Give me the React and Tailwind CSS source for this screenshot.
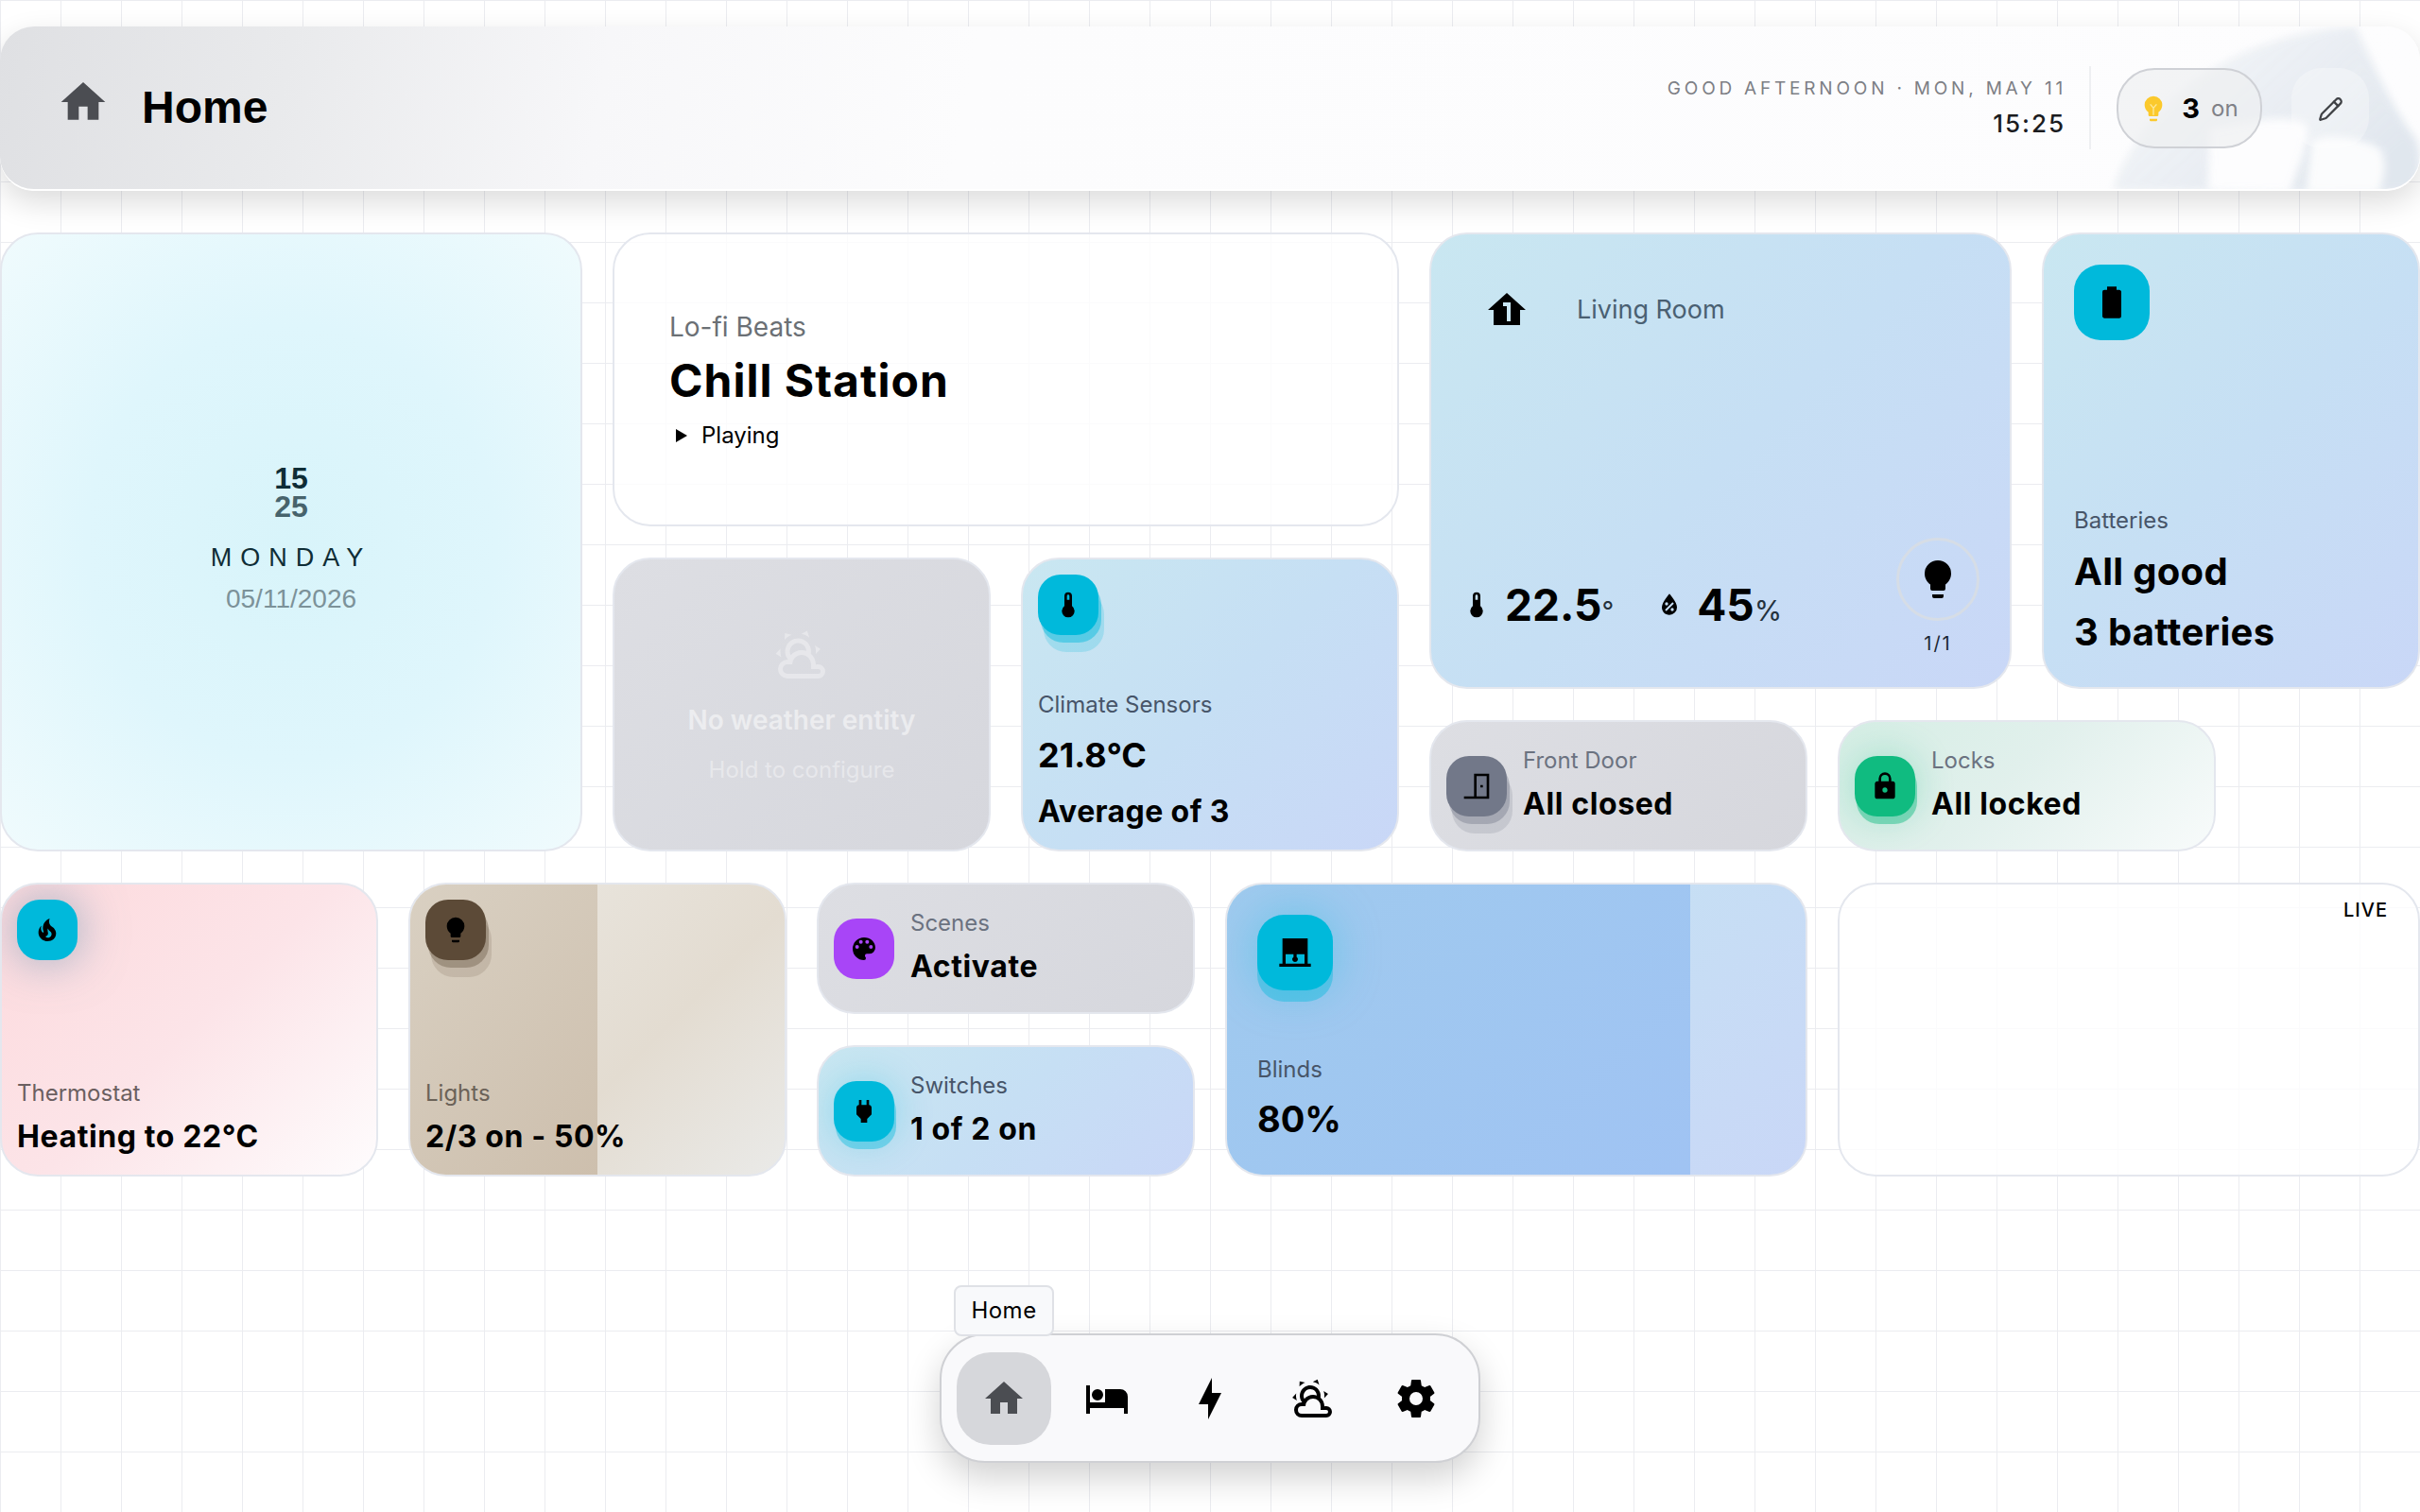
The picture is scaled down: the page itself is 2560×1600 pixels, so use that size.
import React from "react"
import { Pencil } from "lucide-react"

const mdi = {
  home: "M10,20V14H14V20H19V12H22L12,3L2,12H5V20H10Z",
  bed: "M19,7H11V14H3V5H1V20H3V17H21V20H23V11A4,4 0 0,0 19,7M7,13A3,3 0 0,0 10,10A3,3 0 0,0 7,7A3,3 0 0,0 4,10A3,3 0 0,0 7,13Z",
  bolt: "M11 15H6L13 1V9H18L11 23V15Z",
  weather: "M12.74,5.47C15.1,6.5 16.35,9.03 15.92,11.46C17.19,12.56 18,14.19 18,16V16.17C18.31,16.06 18.65,16 19,16A3,3 0 0,1 22,19A3,3 0 0,1 19,22H6A4,4 0 0,1 2,18A4,4 0 0,1 6,14H6.27C5,12.45 4.6,10.24 5.5,8.26C6.72,5.5 9.97,4.24 12.74,5.47M11.93,7.3C10.16,6.5 8.09,7.31 7.31,9.07C6.85,10.09 6.93,11.22 7.41,12.13C8.5,10.83 10.16,10 12,10C12.7,10 13.38,10.12 14,10.34C13.94,9.06 13.18,7.86 11.93,7.3M13.55,3.64C13,3.4 12.45,3.23 11.88,3.12L14.37,1.82L15.27,4.71C14.76,4.29 14.19,3.93 13.55,3.64M6.09,4.44C5.6,4.79 5.17,5.19 4.8,5.63L4.91,2.82L7.87,3.5C7.25,3.71 6.65,4.03 6.09,4.44M18,9.71C17.91,9.12 17.78,8.55 17.59,8L19.97,9.5L17.92,11.73C18.03,11.08 18.05,10.4 18,9.71M3.04,11.3C3.11,11.9 3.24,12.47 3.43,13L1.06,11.5L3.1,9.28C3,9.93 2.97,10.61 3.04,11.3M19,18H16V16A4,4 0 0,0 12,12A4,4 0 0,0 8,16H6A2,2 0 0,0 4,18A2,2 0 0,0 6,20H19A1,1 0 0,0 20,19A1,1 0 0,0 19,18Z",
  cog: "M12,15.5A3.5,3.5 0 0,1 8.5,12A3.5,3.5 0 0,1 12,8.5A3.5,3.5 0 0,1 15.5,12A3.5,3.5 0 0,1 12,15.5M19.43,12.97C19.47,12.65 19.5,12.33 19.5,12C19.5,11.67 19.47,11.34 19.43,11L21.54,9.37C21.73,9.22 21.78,8.95 21.66,8.73L19.66,5.27C19.54,5.05 19.27,4.96 19.05,5.05L16.56,6.05C16.04,5.66 15.5,5.32 14.87,5.07L14.5,2.42C14.46,2.18 14.25,2 14,2H10C9.75,2 9.54,2.18 9.5,2.42L9.13,5.07C8.5,5.32 7.96,5.66 7.44,6.05L4.95,5.05C4.73,4.96 4.46,5.05 4.34,5.27L2.34,8.73C2.21,8.95 2.27,9.22 2.46,9.37L4.57,11C4.53,11.34 4.5,11.67 4.5,12C4.5,12.33 4.53,12.65 4.57,12.97L2.46,14.63C2.27,14.78 2.21,15.05 2.34,15.27L4.34,18.73C4.46,18.95 4.73,19.03 4.95,18.95L7.44,17.94C7.96,18.34 8.5,18.68 9.13,18.93L9.5,21.58C9.54,21.82 9.75,22 10,22H14C14.25,22 14.46,21.82 14.5,21.58L14.87,18.93C15.5,18.67 16.04,18.34 16.56,17.94L19.05,18.95C19.27,19.03 19.54,18.95 19.66,18.73L21.66,15.27C21.78,15.05 21.73,14.78 21.54,14.63L19.43,12.97Z",
  bulb: "M12,2A7,7 0 0,0 5,9C5,11.38 6.19,13.47 8,14.74V17A1,1 0 0,0 9,18H15A1,1 0 0,0 16,17V14.74C17.81,13.47 19,11.38 19,9A7,7 0 0,0 12,2M9,21A1,1 0 0,0 10,22H14A1,1 0 0,0 15,21V20H9V21Z",
  battery: "M16.67,4H15V2H9V4H7.33A1.33,1.33 0 0,0 6,5.33V20.67C6,21.4 6.6,22 7.33,22H16.67A1.33,1.33 0 0,0 18,20.67V5.33C18,4.6 17.4,4 16.67,4Z",
  thermometer: "M15 13V5A3 3 0 0 0 9 5V13A5 5 0 1 0 15 13M12 4A1 1 0 0 1 13 5V8H11V5A1 1 0 0 1 12 4Z",
  water: "M12,3.25C12,3.25 6,10 6,14C6,17.32 8.69,20 12,20A6,6 0 0,0 18,14C18,10 12,3.25 12,3.25M14.47,9.97L15.53,11.03L9.53,17.03L8.47,15.97M9.75,10A1.25,1.25 0 0,1 11,11.25A1.25,1.25 0 0,1 9.75,12.5A1.25,1.25 0 0,1 8.5,11.25A1.25,1.25 0 0,1 9.75,10M14.25,14.5A1.25,1.25 0 0,1 15.5,15.75A1.25,1.25 0 0,1 14.25,17A1.25,1.25 0 0,1 13,15.75A1.25,1.25 0 0,1 14.25,14.5Z",
  door: "M22,2H10V20H2V22H22V2M20,4V20H12V4H20M15,11H17V13H15V11Z",
  lock: "M12,17A2,2 0 0,0 14,15C14,13.89 13.1,13 12,13A2,2 0 0,0 10,15A2,2 0 0,0 12,17M18,8A2,2 0 0,1 20,10V20A2,2 0 0,1 18,22H6A2,2 0 0,1 4,20V10C4,8.89 4.9,8 6,8H7V6A5,5 0 0,1 12,1A5,5 0 0,1 17,6V8H18M12,3A3,3 0 0,0 9,6V8H15V6A3,3 0 0,0 12,3Z",
  fire: "M17.66 11.2C17.43 10.9 17.15 10.64 16.89 10.38C16.22 9.78 15.46 9.35 14.82 8.72C13.33 7.26 13 4.85 13.95 3C13 3.23 12.17 3.75 11.46 4.32C8.87 6.4 7.85 10.07 9.07 13.22C9.11 13.32 9.15 13.42 9.15 13.55C9.15 13.77 9 13.97 8.8 14.05C8.57 14.15 8.33 14.09 8.14 13.93C8.08 13.88 8.04 13.83 8 13.76C6.87 12.33 6.69 10.28 7.45 8.64C5.78 10 4.87 12.3 5 14.47C5.06 14.97 5.12 15.47 5.29 15.97C5.43 16.57 5.7 17.17 6 17.7C7.08 19.43 8.95 20.67 10.96 20.92C13.1 21.19 15.39 20.8 17.03 19.32C18.86 17.66 19.5 15 18.56 12.72L18.43 12.46C18.22 12 17.66 11.2 17.66 11.2M14.5 17.5C14.22 17.74 13.76 18 13.4 18.1C12.28 18.5 11.16 17.94 10.5 17.28C11.69 17 12.4 16.12 12.61 15.23C12.78 14.43 12.46 13.77 12.33 13C12.21 12.26 12.23 11.63 12.5 10.94C12.69 11.32 12.89 11.7 13.13 12C13.9 13 15.11 13.44 15.37 14.8C15.41 14.94 15.43 15.08 15.43 15.23C15.46 16.05 15.1 16.95 14.5 17.5H14.5Z",
  palette: "M17.5,12A1.5,1.5 0 0,1 16,10.5A1.5,1.5 0 0,1 17.5,9A1.5,1.5 0 0,1 19,10.5A1.5,1.5 0 0,1 17.5,12M14.5,8A1.5,1.5 0 0,1 13,6.5A1.5,1.5 0 0,1 14.5,5A1.5,1.5 0 0,1 16,6.5A1.5,1.5 0 0,1 14.5,8M9.5,8A1.5,1.5 0 0,1 8,6.5A1.5,1.5 0 0,1 9.5,5A1.5,1.5 0 0,1 11,6.5A1.5,1.5 0 0,1 9.5,8M6.5,12A1.5,1.5 0 0,1 5,10.5A1.5,1.5 0 0,1 6.5,9A1.5,1.5 0 0,1 8,10.5A1.5,1.5 0 0,1 6.5,12M12,3A9,9 0 0,0 3,12A9,9 0 0,0 12,21A1.5,1.5 0 0,0 13.5,19.5C13.5,19.11 13.35,18.76 13.11,18.5C12.88,18.23 12.73,17.88 12.73,17.5A1.5,1.5 0 0,1 14.23,16H16A5,5 0 0,0 21,11C21,6.58 16.97,3 12,3Z",
  plug: "M16,7V3H14V7H10V3H8V7H8C7,7 6,8 6,9V14.5L9.5,18V21H14.5V18L18,14.5V9C18,8 17,7 16,7Z",
  shade: "M20 19V3H4V19H2V21H22V19H20M6 19V13H11V14.8C10.6 15.1 10.2 15.6 10.2 16.2C10.2 17.2 11 18 12 18C13 18 13.8 17.2 13.8 16.2C13.8 15.6 13.5 15.1 13 14.8V13H18V19H6Z",
  homeOne: "M12,3L2,12H5V20H19V12H22L12,3M10,8H14V18H12V10H10V8Z",
}

function Icon ({path, className}) {
  return (
    <svg viewBox="0 0 24 24" className={className} fill="currentColor">
      <path d={path} />
    </svg>
  )
}

function Badge ({path, className, big}) {
  return (
    <div className={`shrink-0 flex items-center justify-center ${big ? "w-20 h-20 rounded-[28px]" : "w-16 h-16 rounded-[24px]"} ${className}`}>
      <Icon path={path} className={big ? "w-10 h-10 text-black" : "w-8 h-8 text-black"} />
    </div>
  )
}

// label + value pair, used by almost every tile
function Info ({label, value, labelColor = "text-[#6b7280]", big}) {
  return (
    <div className="relative min-w-0 pb-[2px]">
      <p className={`text-2xl leading-[38px] mb-[2px] ${labelColor}`}>{label}</p>
      <p className={`font-bold text-black ${big ? "text-[38px] leading-[62px]" : "text-[32px] leading-[50px] tracking-[0.6px]"}`}>{value}</p>
    </div>
  )
}

function Tile ({className, children}) {
  return (
    <div className={`relative overflow-hidden rounded-[40px] border-2 border-[#e4e7ee] ${className}`}>
      {children}
    </div>
  )
}

const blue = "bg-[linear-gradient(135deg,#c9e7f1_0%,#c6dff4_50%,#c9d7f7_100%)]"
const gray = "bg-[linear-gradient(135deg,#dddee3_0%,#d6d7dd_100%)]"

function Header () {
  return (
    <header className="relative h-[174px] rounded-[36px] flex items-center justify-between pl-[60px] pr-[54px] bg-[linear-gradient(100deg,#dfe0e3_0%,#e9eaec_12%,#f7f7f9_25%,#fcfcfd_40%,#fdfdfe_100%)] border-b-2 border-white shadow-[0_12px_32px_rgba(0,0,0,0.14)]">
      <div className="absolute inset-0 rounded-[36px] overflow-hidden">
        <svg viewBox="0 0 400 174" className="absolute right-0 top-0 w-[400px] h-[174px] opacity-80">
          <defs>
            <filter id="soft"><feGaussianBlur stdDeviation="4" /></filter>
            <linearGradient id="ghost" x1="0" y1="0" x2="1" y2="0.6">
              <stop offset="0" stopColor="#e9eef2" stopOpacity="0.1" />
              <stop offset="0.4" stopColor="#e2e8ee" stopOpacity="0.7" />
              <stop offset="1" stopColor="#d9e1ea" />
            </linearGradient>
          </defs>
          <path filter="url(#soft)" fill="url(#ghost)" d="M75,174 C95,110 150,60 200,34 C240,14 290,2 332,0 C350,40 370,85 396,120 C402,135 402,160 392,176 Z" />
          <path filter="url(#soft)" fill="#fdfdfe" d="M176,174 L178,108 C220,100 260,92 280,104 C284,122 270,150 262,176 Z" />
          <path filter="url(#soft)" fill="#fbfcfd" d="M280,176 L286,122 C300,112 340,118 358,130 C366,145 362,162 356,176 Z" />
        </svg>
      </div>
      <div className="relative flex items-center gap-[34px]">
        <Icon path={mdi.home} className="w-14 h-14 text-[#4b4d52] -mt-3" />
        <h1 className="text-[48px] font-bold text-black font-['Liberation_Sans',sans-serif]">Home</h1>
      </div>
      <div className="relative flex items-center">
        <div className="text-right">
          <p className="text-[19px] leading-[26px] tracking-[3.8px] text-[#7d7f85] -mr-1">GOOD AFTERNOON · MON, MAY 11</p>
          <p className="text-[26px] leading-[34px] tracking-[2px] font-medium text-[#1b1c1f] mt-[7px] -mr-[3px]">15:25</p>
        </div>
        <div className="w-0.5 h-[88px] bg-[#eeeff2] ml-[28px] mr-[27px]" />
        <div className="w-[154px] h-[85px] rounded-[40px] border-2 border-[#cfd1d6] bg-[#eeeff1]/70 flex items-center justify-center pt-[2px] pr-[2px]">
          <svg viewBox="0 0 24 24" className="w-8 h-8 mr-[14px]" fill="#fbc92c">
            <path d={mdi.bulb} />
            <path d="M9.5 8.5l2.5 3l2.5-3M12 11.5V17" fill="none" stroke="#fdeaa0" strokeWidth="1" />
          </svg>
          <span className="text-[29px] font-bold text-black mr-3">3</span>
          <span className="text-2xl text-[#7f8187]">on</span>
        </div>
        <div className="ml-[31px] w-[82px] h-[85px] rounded-[32px] bg-white/30 flex items-center justify-center pt-[2px]">
          <Pencil size={27} strokeWidth={2} className="text-[#3f4145]" />
        </div>
      </div>
    </header>
  )
}

function ClockCard () {
  return (
    <Tile className="col-span-3 row-span-4 flex flex-col items-center justify-center pb-[6px] font-['Liberation_Sans',sans-serif] bg-[radial-gradient(ellipse_at_center,#d8f4fa_0%,#dff6fc_50%,#f0fbfd_100%)]">
      <p className="text-[32px] leading-[30px] font-bold text-[#0f2d36]">15</p>
      <p className="text-[32px] leading-[30px] font-bold text-[#47636c]">25</p>
      <p className="text-[27px] leading-[34px] tracking-[9px] text-[#0f2d36] mt-[22px]">MONDAY</p>
      <p className="text-[28px] leading-[34px] text-[#7c9299] mt-[10px]">05/11/2026</p>
    </Tile>
  )
}

function MediaCard () {
  return (
    <Tile className="col-span-4 row-span-2 flex flex-col justify-center pl-[58px] bg-white/80">
      <p className="text-[28px] leading-[44px] text-[#6b7075]">Lo-fi Beats</p>
      <p className="text-[48px] leading-[64px] tracking-[1px] font-bold text-black mt-[3px]">Chill Station</p>
      <div className="flex items-center mt-[8px] text-2xl leading-[36px] text-black">
        <span className="w-0 h-0 ml-[7px] mr-[15px] border-y-[7px] border-y-transparent border-l-[12px] border-l-black" />
        Playing
      </div>
    </Tile>
  )
}

function LivingRoom () {
  return (
    <Tile className={`col-span-3 row-span-3 ${blue}`}>
      <div className="flex flex-col h-full">
        <div className="flex items-center pl-[56px] pt-[56px]">
          <Icon path={mdi.homeOne} className="w-12 h-12 text-black" />
          <span className="text-[27px] text-[#4a6072] ml-[50px]">Living Room</span>
        </div>
        <div className="flex items-start justify-between mt-auto pl-[32px] pr-[32px] pb-[32px]">
          <div className="flex items-baseline mb-[25px] self-end">
            <Icon path={mdi.thermometer} className="w-8 h-8 text-black self-center" />
            <span className="text-[46px] leading-[60px] font-bold text-black ml-[14px]">22.5</span>
            <span className="text-[28px] text-[#24313d]">°</span>
            <Icon path={mdi.water} className="w-8 h-8 text-black self-center ml-[43px]" />
            <span className="text-[46px] leading-[60px] font-bold text-black ml-[13px]">45</span>
            <span className="text-[30px] text-[#24313d]">%</span>
          </div>
          <div className="flex flex-col items-center">
            <div className="w-[88px] h-[88px] rounded-full border-[3px] border-[#d6dde6] flex items-center justify-center">
              <Icon path={mdi.bulb} className="w-12 h-12 text-black" />
            </div>
            <span className="text-[20px] leading-7 tracking-[2px] text-[#1c2733] mt-[10px]">1/1</span>
          </div>
        </div>
      </div>
    </Tile>
  )
}

function WeatherCard () {
  return (
    <Tile className={`col-span-2 row-span-2 flex flex-col items-center pt-[71px] ${gray}`}>
      <Icon path={mdi.weather} className="w-[60px] h-[60px] text-white/35" />
      <p className="text-[28px] font-semibold leading-[44px] text-white/50 mt-[17px]">No weather entity</p>
      <p className="text-2xl leading-[38px] text-white/40 mt-[12px]">Hold to configure</p>
    </Tile>
  )
}

function PillTile ({className, badge, badgeClass, label, value, labelColor}) {
  return (
    <Tile className={`col-span-2 flex items-center pl-[16px] gap-[17px] ${className}`}>
      <Badge path={badge} className={`relative ${badgeClass}`} />
      <Info label={label} value={value} labelColor={labelColor} />
    </Tile>
  )
}

function App () {
  return (
    <div className="relative h-[1600px] overflow-hidden bg-white font-['Inter',sans-serif] bg-[linear-gradient(#ebecf0_1px,transparent_1px),linear-gradient(90deg,#ebecf0_1px,transparent_1px)] bg-[size:64px_64px]">
      <div className="pt-[28px]">
        <Header />
      </div>

      <main className="grid grid-cols-12 gap-x-8 gap-y-[33px] auto-rows-[139px] mt-[44px]">
        <ClockCard />
        <MediaCard />
        <LivingRoom />

        <Tile className={`col-span-2 row-span-3 flex flex-col pl-[32px] pt-[32px] pb-[26px] ${blue}`}>
          <Badge path={mdi.battery} big className="bg-[#00b9db]" />
          <div className="mt-auto">
            <p className="text-2xl leading-[38px] mb-[2px] text-[#475569]">Batteries</p>
            <p className="text-[40px] leading-[65px] font-bold tracking-[0.3px] text-black">All good</p>
            <p className="text-[40px] leading-[64px] font-bold tracking-[0.3px] text-black">3 batteries</p>
          </div>
        </Tile>

        <WeatherCard />

        <Tile className={`col-span-2 row-span-2 flex flex-col pl-[16px] pt-[16px] pb-[15px] ${blue}`}>
          <Badge path={mdi.thermometer} className="bg-[#00b9db] shadow-[3px_8px_0_rgba(0,185,219,0.45),6px_18px_0_rgba(0,185,219,0.2)]" />
          <div className="mt-auto">
            <p className="text-2xl leading-[38px] text-[#475569]">Climate Sensors</p>
            <p className="text-[36px] leading-[58px] font-bold text-black mt-[5px] mb-[5px]">21.8°C</p>
            <p className="text-[32px] leading-[51px] font-bold tracking-[0.4px] text-black">Average of 3</p>
          </div>
        </Tile>

        <PillTile
          className={gray}
          badge={mdi.door}
          badgeClass="bg-[#727889] shadow-[3px_8px_0_rgba(114,120,137,0.4),6px_18px_0_rgba(114,120,137,0.2)]"
          label="Front Door"
          value="All closed"
        />

        <Tile className="col-span-2 flex items-center pl-[16px] gap-[17px] bg-[linear-gradient(135deg,#d6eee5_0%,#e1f0ec_45%,#f8fbfb_100%)]">
          <Badge path={mdi.lock} className="relative bg-[#10bb80] shadow-[2px_8px_0_rgba(16,187,128,0.45),0_0_40px_rgba(16,187,128,0.3)]" />
          <Info label="Locks" value="All locked" />
        </Tile>

        {/* empty cell next to the locks tile */}
        <div className="col-span-1" />

        <Tile className="col-span-2 row-span-2 flex flex-col pl-[16px] pt-[16px] pb-[13px] bg-[linear-gradient(135deg,#fddadd_0%,#fce4e8_50%,#fefcfd_100%)]">
          <Badge path={mdi.fire} className="bg-[#00b9db] shadow-[0_0_50px_rgba(110,150,180,0.7)]" />
          <div className="mt-auto">
            <Info label="Thermostat" value="Heating to 22°C" labelColor="text-[#6b5f60]" />
          </div>
        </Tile>

        <Tile className="col-span-2 row-span-2 bg-[linear-gradient(135deg,#ece9e3_0%,#e3dcd1_60%,#eaeae8_100%)]">
          <div className="absolute inset-y-0 left-0 w-1/2 bg-[linear-gradient(135deg,#d9d0c2_0%,#cdbfad_100%)]" />
          <div className="relative flex flex-col h-full pl-[16px] pt-[16px] pb-[13px]">
            <Badge path={mdi.bulb} className="bg-[#5c4a37] shadow-[3px_8px_0_rgba(92,74,55,0.35),6px_18px_0_rgba(92,74,55,0.15)]" />
            <div className="mt-auto">
              <Info label="Lights" value="2/3 on - 50%" labelColor="text-[#6b6258]" />
            </div>
          </div>
        </Tile>

        <PillTile
          className={gray}
          badge={mdi.palette}
          badgeClass="bg-[#a845f7]"
          label="Scenes"
          value="Activate"
        />

        <Tile className={`col-span-3 row-span-2 ${blue}`}>
          <div className="absolute inset-y-0 left-0 w-4/5 bg-[linear-gradient(135deg,#9fcaee_0%,#a0c3f3_100%)]" />
          <div className="relative flex flex-col h-full pl-[32px] pt-[32px] pb-[26px]">
            <Badge path={mdi.shade} big className="bg-[#00b9db] shadow-[0_12px_0_rgba(0,185,219,0.4),0_0_50px_rgba(0,185,219,0.35)]" />
            <div className="mt-auto">
              <Info label="Blinds" value="80%" labelColor="text-[#475569]" big />
            </div>
          </div>
        </Tile>

        <Tile className="col-span-3 row-span-2 bg-white/80">
          <span className="absolute right-[32px] top-[11px] text-[20px] leading-8 font-medium tracking-[1px] text-black">LIVE</span>
        </Tile>

        <PillTile
          className={blue}
          badge={mdi.plug}
          badgeClass="bg-[#00b9db] shadow-[2px_8px_0_rgba(0,185,219,0.4),0_0_40px_rgba(0,185,219,0.3)]"
          label="Switches"
          value="1 of 2 on"
          labelColor="text-[#475569]"
        />
      </main>

      <nav className="absolute left-1/2 -translate-x-1/2 top-[1411px] w-[572px] h-[137px] rounded-[48px] border-2 border-[#cfd0d4] bg-[#f9f9fb] shadow-[0_16px_36px_rgba(0,0,0,0.18)] flex items-center justify-between px-[16px]">
        <span className="absolute -top-[53px] left-[13px] w-[106px] h-[54px] rounded-lg border-2 border-[#dfe1e6] bg-[#f8f9fb] flex items-center justify-center text-2xl text-black tracking-[0.5px]">Home</span>
        <div className="w-[100px] h-[98px] rounded-[36px] bg-[#d6d7db] flex items-center justify-center">
          <Icon path={mdi.home} className="w-12 h-12 text-[#4b4d52]" />
        </div>
        {[mdi.bed, mdi.bolt, mdi.weather, mdi.cog].map((p) => (
          <div key={p} className="w-[100px] h-[98px] flex items-center justify-center">
            <Icon path={p} className="w-12 h-12 text-black" />
          </div>
        ))}
      </nav>
    </div>
  )
}

export default App
